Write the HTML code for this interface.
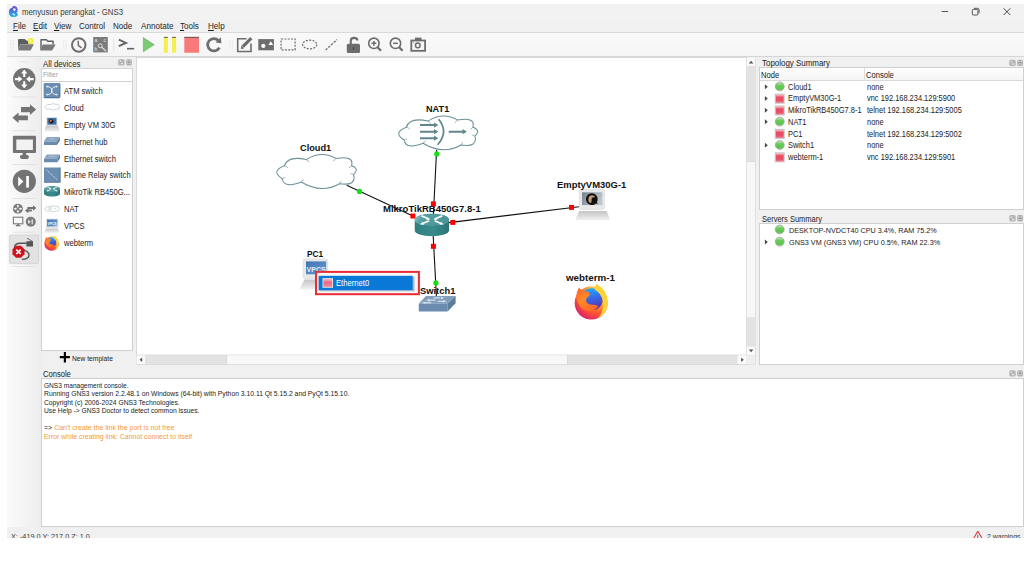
<!DOCTYPE html>
<html><head><meta charset="utf-8">
<style>
*{box-sizing:border-box;margin:0;padding:0}
html,body{width:1024px;height:576px;overflow:hidden;background:#fff;font-family:"Liberation Sans",sans-serif;color:#000}
.a{position:absolute}
.t{position:absolute;white-space:pre;-webkit-text-stroke:0px}
svg{position:absolute;left:0;top:0;overflow:visible}
</style></head><body>
<div class="a" style="left:7px;top:4px;width:1017px;height:534px;background:#f0f0f0"></div>
<div class="a" style="left:7px;top:4px;width:1017px;height:17px;background:#f2f2f2"></div>
<div class="a" style="left:7px;top:21px;width:1017px;height:11px;background:#f0f0f0"></div>
<div class="a" style="left:7px;top:32px;width:1017px;height:1px;background:#dadada"></div>
<div class="a" style="left:7px;top:33px;width:1017px;height:23px;background:linear-gradient(#f9f9f9,#f5f5f5)"></div>
<div class="a" style="left:7px;top:56px;width:1017px;height:1px;background:#d6d6d6"></div>
<div class="a" style="left:7px;top:57px;width:34px;height:470px;background:linear-gradient(90deg,#fbfbfb,#ededed)"></div>
<div class="t" style="left:21.50px;top:8.12px;font-size:8.580px;line-height:8.580px;font-weight:400;color:#3c3c3c;transform:scaleX(0.9091);transform-origin:0 0;">menyusun perangkat - GNS3</div>
<div class="t" style="left:12.80px;top:22.41px;font-size:8.910px;line-height:8.910px;font-weight:400;color:#1e1e1e;transform:scaleX(0.9091);transform-origin:0 0;"><u>F</u>ile</div>
<div class="t" style="left:32.70px;top:22.41px;font-size:8.910px;line-height:8.910px;font-weight:400;color:#1e1e1e;transform:scaleX(0.9091);transform-origin:0 0;"><u>E</u>dit</div>
<div class="t" style="left:54.40px;top:22.41px;font-size:8.910px;line-height:8.910px;font-weight:400;color:#1e1e1e;transform:scaleX(0.9091);transform-origin:0 0;"><u>V</u>iew</div>
<div class="t" style="left:79.20px;top:22.41px;font-size:8.910px;line-height:8.910px;font-weight:400;color:#1e1e1e;transform:scaleX(0.9091);transform-origin:0 0;">Control</div>
<div class="t" style="left:113.40px;top:22.41px;font-size:8.910px;line-height:8.910px;font-weight:400;color:#1e1e1e;transform:scaleX(0.9091);transform-origin:0 0;">Node</div>
<div class="t" style="left:140.90px;top:22.41px;font-size:8.910px;line-height:8.910px;font-weight:400;color:#1e1e1e;transform:scaleX(0.9091);transform-origin:0 0;">Annotate</div>
<div class="t" style="left:180.40px;top:22.41px;font-size:8.910px;line-height:8.910px;font-weight:400;color:#1e1e1e;transform:scaleX(0.9091);transform-origin:0 0;"><u>T</u>ools</div>
<div class="t" style="left:207.70px;top:22.41px;font-size:8.910px;line-height:8.910px;font-weight:400;color:#1e1e1e;transform:scaleX(0.9091);transform-origin:0 0;"><u>H</u>elp</div>
<svg width="1024" height="576" viewBox="0 0 1024 576">
<path d="M10.9,40 L10.9,49.5 M13.3,40 L13.3,49.5" stroke="#d9d9d9" stroke-width="0.7" stroke-dasharray="1.1,1.1"/><path d="M63.699999999999996,40 L63.699999999999996,49.5 M66.1,40 L66.1,49.5" stroke="#d9d9d9" stroke-width="0.7" stroke-dasharray="1.1,1.1"/><path d="M230.20000000000002,40 L230.20000000000002,49.5 M232.60000000000002,40 L232.60000000000002,49.5" stroke="#d9d9d9" stroke-width="0.7" stroke-dasharray="1.1,1.1"/>
<path d="M18,40 Q18,38.9 19,38.9 L24.6,38.9 L27,40.8 L28.5,40.8 L28.5,44 L20.5,44 L18.3,50.4 Z" fill="#5e5e5e"/>
<path d="M20.5,44.2 L33.9,44.2 L30.6,50.5 L18.3,50.5 Z" fill="#7a7a7a"/>
<circle cx="30.75" cy="41.1" r="3" fill="#f2ee3a"/><circle cx="30.6" cy="40.9" r="1.1" fill="#fbf9b0"/>
<path d="M40.3,50.4 L40.3,39.8 Q40.3,38.9 41.2,38.9 L46.6,38.9 L48,40.5 L53,40.5 Q53.8,40.5 53.8,41.3 L53.8,44.4 L52.3,44.4 L52.3,41.9 L47.5,41.9 L46.2,40.4 L41.7,40.4 L41.7,48 Z" fill="#5e5e5e"/>
<path d="M42.6,44.6 L55.7,44.6 L52.1,50.5 L40.4,50.5 Z" fill="#7a7a7a"/>
<circle cx="78.75" cy="44.9" r="6.75" fill="none" stroke="#6d6d6d" stroke-width="2"/>
<path d="M78.2,40.8 L78.4,45.6 L81.6,47.8" fill="none" stroke="#6d6d6d" stroke-width="1.5"/>
<rect x="93.2" y="37" width="14.6" height="15.4" fill="#7b7b7b"/>
<text x="94.4" y="41.8" font-size="5" fill="#e6e6e6" font-family="Liberation Sans">a</text>
<text x="103.4" y="41.8" font-size="5" fill="#e6e6e6" font-family="Liberation Sans">c</text>
<text x="94.4" y="51" font-size="5" fill="#e6e6e6" font-family="Liberation Sans">b</text>
<path d="M101.5,47 L106.2,51.2" stroke="#d6d6d6" stroke-width="1.5"/><circle cx="100.2" cy="45.8" r="2" fill="none" stroke="#e0e0e0" stroke-width="0.9"/>
<rect x="113.4" y="38.5" width="0.8" height="13" fill="#dedede"/>
<path d="M118.8,39.6 L126,42.9 L118.8,46.2" fill="none" stroke="#666" stroke-width="2"/>
<rect x="127" y="47.9" width="7.2" height="1.6" fill="#666"/>
<path d="M142.9,37.5 L154.4,44.9 L142.9,52.5 Z" fill="#7ccb73"/>
<path d="M142.9,37.5 L154.4,44.9" stroke="#4a6a44" stroke-width="0.5" fill="none"/>
<rect x="163.8" y="36.9" width="4.1" height="15.85" fill="#f6ef52"/><rect x="163.8" y="36.9" width="4.1" height="0.9" fill="#555"/>
<rect x="172" y="36.9" width="4.1" height="15.85" fill="#f6ef52"/><rect x="172" y="36.9" width="4.1" height="0.9" fill="#555"/>
<rect x="184.3" y="36.9" width="14.7" height="15.85" fill="#f87a7a"/><rect x="184.3" y="36.9" width="14.7" height="0.9" fill="#555"/>
<path d="M218.5,40.6 A6.2,6.2 0 1 0 219.4,47.6" fill="none" stroke="#6d6d6d" stroke-width="2.7"/>
<path d="M215.6,42.6 L221.4,43.2 L220.8,37.3 Z" fill="#6d6d6d"/>
<path d="M246.5,38.8 L237.7,38.8 L237.7,51.5 L251,51.5 L251,43.5" fill="none" stroke="#6d6d6d" stroke-width="1.6"/>
<path d="M242.8,46.6 L251.3,38.1" stroke="#6d6d6d" stroke-width="3.2"/>
<path d="M240.8,49 L241.4,45.6 L244.2,48.4 Z" fill="#6d6d6d"/>
<rect x="258.3" y="39.1" width="15.6" height="11.2" fill="#6d6d6d"/>
<circle cx="263.3" cy="45.9" r="2.1" fill="#fff"/><path d="M268.4,45.1 L273.2,45.1 L270.8,41.3 Z" fill="#fff"/>
<rect x="281.1" y="39" width="14" height="10.8" fill="none" stroke="#6d6d6d" stroke-width="1.2" stroke-dasharray="2,1.3"/>
<ellipse cx="309.7" cy="44.5" rx="7.1" ry="4.3" fill="none" stroke="#6d6d6d" stroke-width="1.2" stroke-dasharray="2,1.3"/>
<path d="M325.6,50 L337,39.6" stroke="#6d6d6d" stroke-width="1.3" stroke-dasharray="2.4,1.3"/>
<rect x="346.8" y="43.7" width="13.2" height="9.2" rx="1.5" fill="#6d6d6d"/>
<path d="M350.8,44 L350.8,40.5 A3.3,2.6 0 0 1 357.4,40.5" fill="none" stroke="#6d6d6d" stroke-width="2.1"/>
<rect x="352.9" y="47.2" width="0.9" height="2.6" fill="#3a3a3a"/>
<circle cx="373.9" cy="43.3" r="5.2" fill="none" stroke="#6d6d6d" stroke-width="1.6"/>
<path d="M377.6,47.2 L381,50.8" stroke="#6d6d6d" stroke-width="2.2"/>
<path d="M371.5,43.3 L376.3,43.3 M373.9,40.9 L373.9,45.7" stroke="#6d6d6d" stroke-width="1.5"/>
<circle cx="395.5" cy="43.3" r="5.2" fill="none" stroke="#6d6d6d" stroke-width="1.6"/>
<path d="M399.2,47.2 L402.6,50.8" stroke="#6d6d6d" stroke-width="2.2"/>
<path d="M393.1,43.3 L397.9,43.3" stroke="#6d6d6d" stroke-width="1.5"/>
<rect x="411.3" y="40.5" width="13.8" height="10.3" fill="none" stroke="#6d6d6d" stroke-width="1.8"/>
<rect x="415" y="37.6" width="6.5" height="2.6" fill="#6d6d6d"/>
<circle cx="417.8" cy="45.4" r="2.3" fill="none" stroke="#6d6d6d" stroke-width="1.5"/>
<rect x="413.2" y="42.3" width="0.9" height="0.9" fill="#6d6d6d"/>
</svg>
<svg width="1024" height="576" viewBox="0 0 1024 576">
<path d="M20.3,61.9 L29,61.9" stroke="#d6d6d6" stroke-width="0.8" stroke-dasharray="1.2,1"/>
<circle cx="24.25" cy="79.1" r="11.2" fill="#737373"/>
<g fill="#fff">
<path d="M24.25,69.6 L27.4,73.6 L25.3,73.6 L25.3,77 L23.2,77 L23.2,73.6 L21.1,73.6 Z"/>
<path d="M24.25,88.6 L27.4,84.6 L25.3,84.6 L25.3,81.2 L23.2,81.2 L23.2,84.6 L21.1,84.6 Z"/>
<path d="M22.4,79.1 L18.4,76 L18.4,78.1 L14.9,78.1 L14.9,80.2 L18.4,80.2 L18.4,82.3 Z"/>
<path d="M26.1,79.1 L30.1,76 L30.1,78.1 L33.6,78.1 L33.6,80.2 L30.1,80.2 L30.1,82.3 Z"/>
</g>
<rect x="12.5" y="96.6" width="23" height="0.7" fill="#dcdcdc"/>
<path d="M21,107 L30,107 L30,104.2 L36.1,109.6 L30,115 L30,112.2 L21,112.2 Z" fill="#737373"/>
<path d="M27.9,115.4 L18.5,115.4 L18.5,112.6 L12.4,117.8 L18.5,123 L18.5,120.2 L27.9,120.2 Z" fill="#737373"/>
<rect x="12.5" y="130.4" width="23" height="0.7" fill="#dcdcdc"/>
<rect x="12.9" y="135.8" width="23.1" height="17.3" rx="1" fill="#737373"/>
<rect x="16.3" y="139.5" width="16.6" height="10.5" fill="#f2f2f2"/>
<rect x="22.6" y="153" width="3.6" height="3" fill="#737373"/>
<rect x="19.9" y="155" width="9" height="3.9" rx="1.8" fill="#737373"/>
<rect x="12.5" y="164.3" width="23" height="0.7" fill="#dcdcdc"/>
<circle cx="24.3" cy="181.3" r="11.6" fill="#737373"/>
<path d="M18.2,176.6 L23.3,181.6 L18.2,186.6 Z" fill="#fff"/>
<rect x="26.2" y="176" width="2.7" height="11.6" fill="#fff"/>
<rect x="12.5" y="198.2" width="23" height="0.7" fill="#dcdcdc"/>
<g transform="translate(17.9,208.8) scale(0.45) translate(-24.25,-79.1)">
<circle cx="24.25" cy="79.1" r="11.2" fill="#7c7c7c"/>
<g fill="#fff">
<path d="M24.25,69.6 L27.4,73.6 L25.3,73.6 L25.3,77 L23.2,77 L23.2,73.6 L21.1,73.6 Z"/>
<path d="M24.25,88.6 L27.4,84.6 L25.3,84.6 L25.3,81.2 L23.2,81.2 L23.2,84.6 L21.1,84.6 Z"/>
<path d="M22.4,79.1 L18.4,76 L18.4,78.1 L14.9,78.1 L14.9,80.2 L18.4,80.2 L18.4,82.3 Z"/>
<path d="M26.1,79.1 L30.1,76 L30.1,78.1 L33.6,78.1 L33.6,80.2 L30.1,80.2 L30.1,82.3 Z"/>
</g></g>
<path d="M27.5,207 L33,207 L33,205.3 L36.3,208 L33,210.7 L33,209 L27.5,209 Z" fill="#707070"/>
<path d="M31.8,209.5 L28.3,209.5 L28.3,208 L25,210.6 L28.3,213.2 L28.3,211.6 L31.8,211.6 Z" fill="#707070"/>
<rect x="13.4" y="217.2" width="9.4" height="6.6" fill="none" stroke="#7a7a7a" stroke-width="1.1"/>
<rect x="17.2" y="223.8" width="1.8" height="1.4" fill="#7a7a7a"/><rect x="15.8" y="225" width="4.6" height="1.3" fill="#7a7a7a"/>
<circle cx="30.75" cy="221.75" r="5" fill="#7a7a7a"/>
<path d="M28.2,219.6 L30.7,221.8 L28.2,224 Z" fill="#eee"/><rect x="31.6" y="219.4" width="1.2" height="4.8" fill="#eee"/>
<rect x="12.5" y="231.8" width="23" height="0.7" fill="#dcdcdc"/>
<rect x="9.3" y="235" width="29.3" height="28.6" rx="1" fill="#e2e2e2" stroke="#cdcdcd" stroke-width="0.7"/>
<path d="M26.6,243.2 L20.5,243.2 Q14.4,243.2 14.4,248" fill="none" stroke="#555" stroke-width="1.4"/>
<path d="M26.4,241.2 L33,241.2 L33,246.5 L26.4,246.5 Z" fill="#555"/>
<path d="M27.2,238.3 L32.4,241.4" stroke="#555" stroke-width="0.9"/>
<path d="M23.6,250.4 Q29.2,251.5 29,255.5 Q28.6,259.2 21.8,259.4" fill="none" stroke="#555" stroke-width="1.4"/>
<path d="M16,245.8 L21,245.8 L24.5,249.3 L24.5,254.3 L21,257.8 L16,257.8 L12.5,254.3 L12.5,249.3 Z" fill="#d0121b"/>
<path d="M16.3,249.6 L20.7,254 M20.7,249.6 L16.3,254" stroke="#fff" stroke-width="1.6"/>
<rect x="12.5" y="266.2" width="23" height="0.7" fill="#dcdcdc"/>
</svg>
<div class="t" style="left:43.40px;top:59.64px;font-size:8.635px;line-height:8.635px;font-weight:400;color:#222;transform:scaleX(0.9091);transform-origin:0 0;">All devices</div>
<div class="a" style="left:41px;top:68px;width:92px;height:14px;background:#fff;border:1px solid #d4d4d4"></div>
<div class="t" style="left:43.20px;top:71.13px;font-size:7.370px;line-height:7.370px;font-weight:400;color:#9c9ca4;transform:scaleX(0.9091);transform-origin:0 0;">Filter</div>
<div class="a" style="left:41px;top:81px;width:92px;height:270px;background:#fff;border:1px solid #cfcfcf"></div>
<div class="t" style="left:63.80px;top:86.74px;font-size:8.360px;line-height:8.360px;font-weight:400;color:#222;transform:scaleX(0.9091);transform-origin:0 0;">ATM switch</div>
<div class="t" style="left:63.80px;top:103.68px;font-size:8.360px;line-height:8.360px;font-weight:400;color:#222;transform:scaleX(0.9091);transform-origin:0 0;">Cloud</div>
<div class="t" style="left:63.80px;top:120.64px;font-size:8.360px;line-height:8.360px;font-weight:400;color:#222;transform:scaleX(0.9091);transform-origin:0 0;">Empty VM 30G</div>
<div class="t" style="left:63.80px;top:137.59px;font-size:8.360px;line-height:8.360px;font-weight:400;color:#222;transform:scaleX(0.9091);transform-origin:0 0;">Ethernet hub</div>
<div class="t" style="left:63.80px;top:154.54px;font-size:8.360px;line-height:8.360px;font-weight:400;color:#222;transform:scaleX(0.9091);transform-origin:0 0;">Ethernet switch</div>
<div class="t" style="left:63.80px;top:171.49px;font-size:8.360px;line-height:8.360px;font-weight:400;color:#222;transform:scaleX(0.9091);transform-origin:0 0;">Frame Relay switch</div>
<div class="t" style="left:63.80px;top:188.43px;font-size:8.360px;line-height:8.360px;font-weight:400;color:#222;transform:scaleX(0.9091);transform-origin:0 0;">MikroTik RB450G...</div>
<div class="t" style="left:63.80px;top:205.39px;font-size:8.360px;line-height:8.360px;font-weight:400;color:#222;transform:scaleX(0.9091);transform-origin:0 0;">NAT</div>
<div class="t" style="left:63.80px;top:222.34px;font-size:8.360px;line-height:8.360px;font-weight:400;color:#222;transform:scaleX(0.9091);transform-origin:0 0;">VPCS</div>
<div class="t" style="left:63.80px;top:239.29px;font-size:8.360px;line-height:8.360px;font-weight:400;color:#222;transform:scaleX(0.9091);transform-origin:0 0;">webterm</div>
<div class="t" style="left:71.90px;top:354.93px;font-size:7.370px;line-height:7.370px;font-weight:400;color:#222;transform:scaleX(0.9091);transform-origin:0 0;">New template</div>
<div class="a" style="left:136px;top:57px;width:611px;height:298px;background:#fff;border-left:1px solid #d8d8d8;border-top:1px solid #d8d8d8"></div>
<svg width="0" height="0" style="position:absolute">
<defs>
<linearGradient id="rtop" x1="0" y1="0" x2="1" y2="0.3"><stop offset="0" stop-color="#9ccdcf"/><stop offset="0.3" stop-color="#56a0a3"/><stop offset="1" stop-color="#4a9598"/></linearGradient>
<linearGradient id="rside" x1="0" y1="0" x2="1" y2="0"><stop offset="0" stop-color="#2f7d80"/><stop offset="0.5" stop-color="#3a8a8c"/><stop offset="1" stop-color="#2c7577"/></linearGradient>
<linearGradient id="scr" x1="0" y1="0" x2="1" y2="1"><stop offset="0" stop-color="#3f74b0"/><stop offset="0.7" stop-color="#5a8fc8"/><stop offset="1" stop-color="#a9c6e6"/></linearGradient>
<linearGradient id="vmscr" x1="0" y1="0" x2="1" y2="0.4"><stop offset="0" stop-color="#76828d"/><stop offset="1" stop-color="#bcc4cc"/></linearGradient>
<linearGradient id="base" x1="0" y1="0" x2="0" y2="1"><stop offset="0" stop-color="#c4c4c4"/><stop offset="1" stop-color="#f2f2f2"/></linearGradient>
<radialGradient id="ffo" cx="0.78" cy="0.15" r="1.0"><stop offset="0" stop-color="#fff44f"/><stop offset="0.35" stop-color="#ffb02e"/><stop offset="0.65" stop-color="#ff5a2a"/><stop offset="0.95" stop-color="#e0206a"/></radialGradient>
<linearGradient id="ffb" x1="0.3" y1="0" x2="0.5" y2="1"><stop offset="0" stop-color="#1fb0ff"/><stop offset="0.5" stop-color="#3a64e6"/><stop offset="1" stop-color="#5a2ea6"/></linearGradient>
<linearGradient id="ffox" x1="0" y1="0" x2="0.6" y2="1"><stop offset="0" stop-color="#ff5a36"/><stop offset="0.5" stop-color="#ff8a22"/><stop offset="1" stop-color="#ff6a2a"/></linearGradient>
<linearGradient id="pink" x1="0" y1="0" x2="0" y2="1"><stop offset="0" stop-color="#f7b5c2"/><stop offset="0.45" stop-color="#e96a84"/><stop offset="1" stop-color="#f08aa0"/></linearGradient>
<linearGradient id="redsq" x1="0" y1="0" x2="0" y2="1"><stop offset="0" stop-color="#f9c0c8"/><stop offset="0.3" stop-color="#ea4a62"/><stop offset="0.75" stop-color="#e8506a"/><stop offset="1" stop-color="#f27e92"/></linearGradient>
<linearGradient id="grn" x1="0" y1="0" x2="0" y2="1"><stop offset="0" stop-color="#d4f0cc"/><stop offset="0.35" stop-color="#6ccc5c"/><stop offset="0.8" stop-color="#58c448"/><stop offset="1" stop-color="#9ae688"/></linearGradient>
<symbol id="router" viewBox="0 0 100 66">
<path d="M0,18 L0,48 A50,18 0 0 0 100,48 L100,18 Z" fill="url(#rside)"/>
<ellipse cx="50" cy="18" rx="50" ry="18" fill="url(#rtop)"/>
<g stroke="#fff" stroke-width="5" fill="none" opacity="0.95">
<path d="M20,7 L42,16"/><path d="M80,7 L58,16"/><path d="M42,21 L22,30"/><path d="M58,21 L78,30"/>
</g>
<g fill="#fff" opacity="0.95">
<path d="M46,17.5 L36,11 L34,19 Z"/><path d="M54,17.5 L64,11 L66,19 Z"/>
<path d="M15,32 L28,33 L23,25 Z"/><path d="M85,32 L72,33 L77,25 Z"/>
</g>
</symbol>
<symbol id="switch" viewBox="0 0 100 44">
<path d="M20,0 L100,0 L78,21.5 L0,21.5 Z" fill="#819fbd"/>
<path d="M0,21.5 L78,21.5 L78,42 L0,42 Z" fill="#6b8cae"/>
<path d="M78,21.5 L100,0 L100,20 L78,42 Z" fill="#5d7d9e"/>
<g fill="#eef3f8" opacity="0.85">
<path d="M40,4 L58,4 L58,7 L40,7 Z"/><path d="M60,2 L70,5.5 L60,9 Z"/>
<path d="M28,10 L46,10 L46,13 L28,13 Z"/><path d="M20,11.5 L30,8 L30,15 Z"/>
<path d="M52,13 L68,13 L68,16 L52,16 Z"/><path d="M66,11 L76,14.5 L66,18 Z"/>
<path d="M14,17 L34,17 L34,20 L14,20 Z"/><path d="M8,18.5 L18,15.5 L18,21 Z"/>
</g>
</symbol>
<symbol id="cloud" viewBox="-2 -2 86 39">
<path d="M31,6.3 Q45.8,-3.5 61,5.1 Q79.5,2 76.5,12.5 Q85,15.5 78.5,21.5 Q82,33 64.4,30.5 Q46,41 26,28.8 Q8.5,35.5 6.9,25.5 Q-5,18 9,12.5 Q12.5,2 31,6.3 Z" fill="#fff" stroke="#6a9197" stroke-width="1.05"/>
<path d="M31,6.3 Q33,7.5 33.5,9 M61,5.1 Q59,6.5 58.5,8 M9,12.5 Q11.5,13 12.5,14.5 M6.9,25.5 Q8.5,24.5 10,24.5 M26,28.8 Q27,27 28.5,26.8 M64.4,30.5 Q65,28.5 66.5,28 M78.5,21.5 Q77,20.5 75.5,20.5 M76.5,12.5 Q75.5,14 74,14.5" fill="none" stroke="#6a9197" stroke-width="0.7"/>
</symbol>
<symbol id="cloudl" viewBox="-2 -2 86 39">
<path d="M31,6.3 Q45.8,-3.5 61,5.1 Q79.5,2 76.5,12.5 Q85,15.5 78.5,21.5 Q82,33 64.4,30.5 Q46,41 26,28.8 Q8.5,35.5 6.9,25.5 Q-5,18 9,12.5 Q12.5,2 31,6.3 Z" fill="#fff" stroke="#b9c9cd" stroke-width="4"/>
</symbol>
<symbol id="slab" viewBox="0 0 100 50">
<path d="M18,0 L100,0 L82,28 L0,28 Z" fill="#8aa6c2"/>
<path d="M0,28 L82,28 L82,50 L0,50 Z" fill="#6a8bad"/>
<path d="M82,28 L100,0 L100,22 L82,50 Z" fill="#587a9c"/>
<path d="M30,12 L70,12" stroke="#d8e2ec" stroke-width="3"/>
</symbol>
<symbol id="laptop" viewBox="0 0 100 100">
<rect x="10" y="0" width="74" height="62" rx="6" fill="#e9e9e9" stroke="#d2d2d2" stroke-width="2"/>
<rect x="19" y="9" width="58" height="40" fill="url(#scr)"/>
<path d="M12,68 L86,68 L100,95 Q100,100 94,100 L6,100 Q0,100 1,95 Z" fill="url(#base)"/>
</symbol>
<symbol id="firefox" viewBox="0 0 100 100">
<circle cx="50" cy="53" r="46" fill="url(#ffo)"/>
<circle cx="51" cy="43" r="31" fill="url(#ffb)"/>
<path d="M64,0 Q94,14 96,50 Q96,82 70,95 Q88,70 82,46 Q78,26 60,16 Q58,8 64,0 Z" fill="#ffd23a"/>
<path d="M8,36 Q10,20 16,10 Q22,16 26,22 Q36,18 44,24 Q48,30 42,36 Q34,40 36,48 Q40,58 54,58 Q64,58 70,62 Q60,76 44,76 Q24,74 16,58 Q9,48 8,36 Z" fill="url(#ffox)"/>
</symbol>
</defs></svg>
<svg width="1024" height="576" viewBox="0 0 1024 576">
<!-- links -->
<g stroke="#111" stroke-width="1.1" fill="none">
<path d="M346.7,185.2 L412.9,216"/>
<path d="M436.6,150 L433.4,214"/>
<path d="M449,222.6 L579,206.7"/>
<path d="M433.2,236 L436.6,300"/>
</g>
<!-- nodes -->
<use href="#cloud" x="273.4" y="151.3" width="85.6" height="38.9" preserveAspectRatio="none"/>
<use href="#cloud" x="395.3" y="112.9" width="85.1" height="38.5" preserveAspectRatio="none"/>
<g fill="#60868c"><path d="M420,124.1 L434.0,124.1 L434.0,122.5 L438.4,125.1 L434.0,127.69999999999999 L434.0,126.1 L420,126.1 Z"/><path d="M420,130.7 L434.0,130.7 L434.0,129.1 L438.4,131.7 L434.0,134.29999999999998 L434.0,132.7 L420,132.7 Z"/><path d="M420,137.2 L434.0,137.2 L434.0,135.6 L438.4,138.2 L434.0,140.79999999999998 L434.0,139.2 L420,139.2 Z"/><path d="M448.7,130.7 L462.6,130.7 L462.6,129.1 L467,131.7 L462.6,134.29999999999998 L462.6,132.7 L448.7,132.7 Z"/></g>
<path d="M438.6,119.2 Q449,131.8 437.6,144.8" fill="none" stroke="#60868c" stroke-width="1.7"/>
<use href="#router" x="414.5" y="213.3" width="34.7" height="23.1" preserveAspectRatio="none"/>
<use href="#switch" x="418.4" y="295.9" width="37.5" height="16.3" preserveAspectRatio="none"/>
<!-- VM laptop -->
<g>
<rect x="579.3" y="189.5" width="25.3" height="20" rx="2" fill="#e9e9e9" stroke="#d6d6d6" stroke-width="0.6"/>
<rect x="582" y="192.3" width="20.4" height="12.8" fill="url(#vmscr)"/>
<path d="M591.8,193.3 A5.9,5.9 0 1 0 596.2,203.2 L597.6,204.6 L597,201.8 A5.9,5.9 0 0 0 591.8,193.3 Z" fill="#111"/>
<path d="M588.6,201.6 Q587.6,196.2 591.2,195.2 Q594,194.8 595.2,197 L593.2,197.6 Q592,197.2 591.6,199 Q592,202 590.6,203 Q589.2,202.8 588.6,201.6 Z" fill="#c29a78"/>
<path d="M579.2,211 L606.7,211 L609.9,219 Q610.2,220.3 608.8,220.3 L576.6,220.3 Q575.2,220.3 575.5,219 Z" fill="url(#base)"/>
</g>
<!-- PC -->
<g>
<rect x="303.1" y="258.9" width="24.7" height="19.6" rx="1.8" fill="#e8e8e8" stroke="#d8d8d8" stroke-width="0.6"/>
<rect x="306" y="261.4" width="20.2" height="12.9" fill="url(#scr)"/>
<text x="306.6" y="271.6" font-family="Liberation Sans" font-weight="700" font-size="6.6" fill="#fff" opacity="0.85" textLength="19" lengthAdjust="spacingAndGlyphs">VPCS</text>
<path d="M304.4,279.6 L326,279.6 L328,289.5 L299.5,289.5 Z" fill="url(#base)"/>
</g>
<use href="#firefox" x="573.2" y="283.4" width="36" height="37" preserveAspectRatio="none"/>
</svg>
<div class="t" style="left:299.80px;top:142.98px;font-size:9.450px;line-height:9.450px;font-weight:700;color:#111;transform:scaleX(0.9770);transform-origin:0 0;">Cloud1</div>
<div class="t" style="left:425.70px;top:104.39px;font-size:9.450px;line-height:9.450px;font-weight:700;color:#111;transform:scaleX(0.9720);transform-origin:0 0;">NAT1</div>
<div class="t" style="left:382.80px;top:203.79px;font-size:9.450px;line-height:9.450px;font-weight:700;color:#111;transform:scaleX(1.0090);transform-origin:0 0;">MikroTikRB450G7.8-1</div>
<div class="t" style="left:557.00px;top:179.57px;font-size:9.450px;line-height:9.450px;font-weight:700;color:#111;transform:scaleX(1.0010);transform-origin:0 0;">EmptyVM30G-1</div>
<div class="t" style="left:307.10px;top:249.19px;font-size:9.450px;line-height:9.450px;font-weight:700;color:#111;transform:scaleX(0.8760);transform-origin:0 0;">PC1</div>
<div class="t" style="left:419.50px;top:285.98px;font-size:9.450px;line-height:9.450px;font-weight:700;color:#111;transform:scaleX(0.9910);transform-origin:0 0;">Switch1</div>
<div class="t" style="left:565.70px;top:273.29px;font-size:9.450px;line-height:9.450px;font-weight:700;color:#111;transform:scaleX(1.0350);transform-origin:0 0;">webterm-1</div>
<svg width="1024" height="576" viewBox="0 0 1024 576">
<g fill="#ff0000">
<rect x="410.4" y="213.5" width="5" height="5"/>
<rect x="450.3" y="219.9" width="5" height="5"/>
<rect x="430.9" y="201.4" width="5" height="5"/>
<rect x="430.9" y="243.8" width="5" height="5"/>
<rect x="569" y="204.9" width="5" height="5"/>
</g>
<g fill="#11e011">
<circle cx="359.5" cy="191.4" r="2.6"/>
<circle cx="436.8" cy="153.9" r="2.6"/>
<circle cx="435.9" cy="282.9" r="2.6"/>
</g>
<!-- popup -->
<rect x="316" y="271.9" width="102.9" height="22.3" fill="#f7f7f7" stroke="#ea2b33" stroke-width="2"/>
<rect x="413" y="277" width="1.6" height="14.3" fill="#b9b9b9"/>
<rect x="320" y="290.2" width="94.6" height="1.2" fill="#c9c9c9"/>
<rect x="318.6" y="275.8" width="94.2" height="14.5" fill="#0a78d7"/>
<rect x="322.5" y="278.1" width="10.5" height="9.7" fill="#e3e3e3"/>
<rect x="323.4" y="279" width="8.7" height="7.9" fill="url(#pink)"/>
</svg>
<div class="t" style="left:336.30px;top:279.46px;font-size:8.426px;line-height:8.426px;font-weight:400;color:#fff;transform:scaleX(0.9091);transform-origin:0 0;-webkit-text-stroke:0">Ethernet0</div>
<svg width="1024" height="576" viewBox="0 0 1024 576">
<!-- ATM switch -->
<rect x="43.6" y="83" width="16.4" height="15.2" rx="1.2" fill="#6a8db2"/>
<path d="M44.3,97.6 L59.3,97.6 L60,96.6 L60,84 L59.3,83.4" fill="none" stroke="#46698c" stroke-width="0.8"/>
<path d="M46.8,86.6 Q51.8,86.6 51.8,90.6 Q51.8,94.6 56.8,94.6 M46.8,94.6 Q51.8,94.6 51.8,90.6 Q51.8,86.6 56.8,86.6" fill="none" stroke="#eef3f8" stroke-width="1"/>
<path d="M57.8,86.6 L56,85.4 L56,87.8 Z M57.8,94.6 L56,93.4 L56,95.8 Z M45.8,86.6 L47.6,85.4 L47.6,87.8 Z M45.8,94.6 L47.6,93.4 L47.6,95.8 Z" fill="#eef3f8"/>
<!-- Cloud -->
<use href="#cloudl" x="44" y="102.6" width="16.2" height="8.2" preserveAspectRatio="none"/>
<!-- Empty VM -->
<rect x="46.6" y="117.3" width="10.6" height="8" fill="#c9d4de"/>
<rect x="47.4" y="118" width="9" height="6.6" fill="#3d6fa8"/>
<circle cx="51.2" cy="121.3" r="2.3" fill="#1a1a1a"/><path d="M49.6,122.6 Q49.4,119.6 51.6,119.4 Q52.6,120.2 51.5,121.2 Z" fill="#ff7a1a"/>
<path d="M46,125.6 L57.8,125.6 L59.6,130.8 Q59.6,131.6 58.8,131.6 L45,131.6 Q44.2,131.6 44.3,130.8 Z" fill="url(#base)"/>
<!-- Ethernet hub / switch -->
<use href="#slab" x="43.6" y="137.1" width="16.5" height="8" preserveAspectRatio="none"/>
<use href="#slab" x="44" y="154.3" width="16.2" height="8.1" preserveAspectRatio="none"/>
<!-- Frame relay -->
<rect x="44" y="167.5" width="16.2" height="14.8" fill="#6a8db2"/>
<path d="M60.2,167.5 L60.2,182.3 L44,182.3" fill="none" stroke="#4b6d8f" stroke-width="0.8"/>
<path d="M46.5,170 L57.5,180" stroke="#e8eef5" stroke-width="0.9" stroke-dasharray="1.2,0.9"/>
<!-- MikroTik -->
<use href="#router" x="44" y="185.9" width="16.2" height="10.8" preserveAspectRatio="none"/>
<!-- NAT -->
<use href="#cloudl" x="44" y="205" width="16" height="7.4" preserveAspectRatio="none"/>
<path d="M48.5,207.6 L52,207.6 M48.5,208.7 L52,208.7 M48.5,209.8 L52,209.8 M53.5,208.7 L56.5,208.7" stroke="#b6c7cb" stroke-width="0.5"/>
<!-- VPCS -->
<rect x="45.8" y="218.4" width="12.6" height="9.6" rx="0.8" fill="#e3e3e3"/>
<rect x="47" y="219.5" width="10.3" height="6.9" fill="url(#scr)"/>
<text x="47.5" y="224.6" font-family="Liberation Sans" font-size="3.3" font-weight="700" fill="#fff" textLength="9" lengthAdjust="spacingAndGlyphs">VPCS</text>
<path d="M46.2,228.6 L57.6,228.6 L59.8,232.8 L44,232.8 Z" fill="url(#base)"/>
<!-- Firefox -->
<use href="#firefox" x="43.4" y="235.4" width="16.3" height="15.6" preserveAspectRatio="none"/>
</svg>
<div class="a" style="left:759px;top:67px;width:265px;height:143px;background:#fff;border:1px solid #cfcfcf"></div>
<div class="t" style="left:761.60px;top:59.37px;font-size:8.745px;line-height:8.745px;font-weight:400;color:#222;transform:scaleX(0.9091);transform-origin:0 0;">Topology Summary</div>
<div class="a" style="left:759px;top:223px;width:265px;height:142px;background:#fff;border:1px solid #cfcfcf"></div>
<div class="t" style="left:761.60px;top:215.61px;font-size:8.250px;line-height:8.250px;font-weight:400;color:#222;transform:scaleX(0.9091);transform-origin:0 0;">Servers Summary</div>
<div class="t" style="left:43.40px;top:370.24px;font-size:8.360px;line-height:8.360px;font-weight:400;color:#222;transform:scaleX(0.9091);transform-origin:0 0;">Console</div>
<div class="a" style="left:41px;top:378px;width:983px;height:149px;background:#fff;border:1px solid #cfcfcf"></div>
<div class="a" style="left:760px;top:68px;width:263px;height:13.1px;background:linear-gradient(#ffffff,#f4f4f4);border-bottom:1px solid #d8d8d8"></div>
<div class="a" style="left:864.3px;top:68px;width:0.8px;height:12.2px;background:#dcdcdc"></div>
<div class="t" style="left:760.80px;top:71.04px;font-size:8.360px;line-height:8.360px;font-weight:400;color:#222;transform:scaleX(0.9091);transform-origin:0 0;">Node</div>
<div class="t" style="left:866.30px;top:71.04px;font-size:8.360px;line-height:8.360px;font-weight:400;color:#222;transform:scaleX(0.9091);transform-origin:0 0;">Console</div>
<div class="t" style="left:788.40px;top:83.71px;font-size:8.250px;line-height:8.250px;font-weight:400;color:#222;transform:scaleX(0.9045);transform-origin:0 0;">Cloud1</div>
<div class="t" style="left:866.60px;top:83.69px;font-size:8.195px;line-height:8.195px;font-weight:400;color:#222;transform:scaleX(0.9091);transform-origin:0 0;">none</div>
<div class="t" style="left:788.40px;top:95.43px;font-size:8.250px;line-height:8.250px;font-weight:400;color:#222;transform:scaleX(0.9045);transform-origin:0 0;">EmptyVM30G-1</div>
<div class="t" style="left:866.60px;top:95.41px;font-size:8.195px;line-height:8.195px;font-weight:400;color:#222;transform:scaleX(0.9091);transform-origin:0 0;">vnc 192.168.234.129:5900</div>
<div class="t" style="left:788.40px;top:107.15px;font-size:8.250px;line-height:8.250px;font-weight:400;color:#222;transform:scaleX(0.9045);transform-origin:0 0;">MikroTikRB450G7.8-1</div>
<div class="t" style="left:866.60px;top:107.14px;font-size:8.195px;line-height:8.195px;font-weight:400;color:#222;transform:scaleX(0.9091);transform-origin:0 0;">telnet 192.168.234.129:5005</div>
<div class="t" style="left:788.40px;top:118.88px;font-size:8.250px;line-height:8.250px;font-weight:400;color:#222;transform:scaleX(0.9045);transform-origin:0 0;">NAT1</div>
<div class="t" style="left:866.60px;top:118.86px;font-size:8.195px;line-height:8.195px;font-weight:400;color:#222;transform:scaleX(0.9091);transform-origin:0 0;">none</div>
<div class="t" style="left:788.40px;top:130.60px;font-size:8.250px;line-height:8.250px;font-weight:400;color:#222;transform:scaleX(0.9045);transform-origin:0 0;">PC1</div>
<div class="t" style="left:866.60px;top:130.58px;font-size:8.195px;line-height:8.195px;font-weight:400;color:#222;transform:scaleX(0.9091);transform-origin:0 0;">telnet 192.168.234.129:5002</div>
<div class="t" style="left:788.40px;top:142.32px;font-size:8.250px;line-height:8.250px;font-weight:400;color:#222;transform:scaleX(0.9045);transform-origin:0 0;">Switch1</div>
<div class="t" style="left:866.60px;top:142.30px;font-size:8.195px;line-height:8.195px;font-weight:400;color:#222;transform:scaleX(0.9091);transform-origin:0 0;">none</div>
<div class="t" style="left:788.40px;top:154.04px;font-size:8.250px;line-height:8.250px;font-weight:400;color:#222;transform:scaleX(0.9045);transform-origin:0 0;">webterm-1</div>
<div class="t" style="left:866.60px;top:154.02px;font-size:8.195px;line-height:8.195px;font-weight:400;color:#222;transform:scaleX(0.9091);transform-origin:0 0;">vnc 192.168.234.129:5901</div>
<div class="t" style="left:788.70px;top:226.74px;font-size:8.030px;line-height:8.030px;font-weight:400;color:#222;transform:scaleX(0.8991);transform-origin:0 0;">DESKTOP-NVDCT40 CPU 3.4%, RAM 75.2%</div>
<div class="t" style="left:788.70px;top:238.85px;font-size:8.030px;line-height:8.030px;font-weight:400;color:#222;transform:scaleX(0.9073);transform-origin:0 0;">GNS3 VM (GNS3 VM) CPU 0.5%, RAM 22.3%</div>
<svg width="1024" height="576" viewBox="0 0 1024 576"><path d="M764.9,84.20 L767.8,86.70 L764.9,89.20 Z" fill="#484848"/><circle cx="779.75" cy="86.40" r="4.4" fill="url(#grn)" stroke="#9ea59e" stroke-width="0.9"/><path d="M764.9,95.92 L767.8,98.42 L764.9,100.92 Z" fill="#484848"/><rect x="774.8" y="93.72" width="9.9" height="10" fill="#c4c4c4"/><rect x="775.9" y="94.82" width="7.7" height="7.9" fill="url(#redsq)"/><path d="M764.9,107.64 L767.8,110.14 L764.9,112.64 Z" fill="#484848"/><rect x="774.8" y="105.44" width="9.9" height="10" fill="#c4c4c4"/><rect x="775.9" y="106.54" width="7.7" height="7.9" fill="url(#redsq)"/><path d="M764.9,119.36 L767.8,121.86 L764.9,124.36 Z" fill="#484848"/><circle cx="779.75" cy="121.56" r="4.4" fill="url(#grn)" stroke="#9ea59e" stroke-width="0.9"/><rect x="774.8" y="128.88" width="9.9" height="10" fill="#c4c4c4"/><rect x="775.9" y="129.98" width="7.7" height="7.9" fill="url(#redsq)"/><path d="M764.9,142.80 L767.8,145.30 L764.9,147.80 Z" fill="#484848"/><circle cx="779.75" cy="145.00" r="4.4" fill="url(#grn)" stroke="#9ea59e" stroke-width="0.9"/><rect x="774.8" y="152.32" width="9.9" height="10" fill="#c4c4c4"/><rect x="775.9" y="153.42" width="7.7" height="7.9" fill="url(#redsq)"/><circle cx="779.75" cy="229.50" r="4.4" fill="url(#grn)" stroke="#9ea59e" stroke-width="0.9"/><path d="M764.9,239.40 L767.8,241.90 L764.9,244.40 Z" fill="#484848"/><circle cx="779.75" cy="241.60" r="4.4" fill="url(#grn)" stroke="#9ea59e" stroke-width="0.9"/></svg>
<div class="t" style="left:43.75px;top:381.67px;font-size:7.480px;line-height:7.480px;font-weight:400;color:#222;transform:scaleX(0.8809);transform-origin:0 0;">GNS3 management console.</div>
<div class="t" style="left:43.75px;top:390.37px;font-size:7.480px;line-height:7.480px;font-weight:400;color:#222;transform:scaleX(0.9082);transform-origin:0 0;">Running GNS3 version 2.2.48.1 on Windows (64-bit) with Python 3.10.11 Qt 5.15.2 and PyQt 5.15.10.</div>
<div class="t" style="left:43.75px;top:398.87px;font-size:7.480px;line-height:7.480px;font-weight:400;color:#222;transform:scaleX(0.9009);transform-origin:0 0;">Copyright (c) 2006-2024 GNS3 Technologies.</div>
<div class="t" style="left:43.75px;top:407.28px;font-size:7.480px;line-height:7.480px;font-weight:400;color:#222;transform:scaleX(0.8991);transform-origin:0 0;">Use Help -&gt; GNS3 Doctor to detect common issues.</div>
<div class="t" style="left:43.75px;top:432.87px;font-size:7.480px;line-height:7.480px;font-weight:400;color:#f59840;transform:scaleX(0.9273);transform-origin:0 0;">Error while creating link: Cannot connect to itself</div>
<div class="t" style="left:43.75px;top:424.17px;font-size:7.480px;line-height:7.480px;font-weight:400;color:#222;transform:scaleX(0.9391);transform-origin:0 0;">=&gt; <span style="color:#f59840">Can't create the link the port is not free</span></div>
<svg width="1024" height="576" viewBox="0 0 1024 576">
<defs><linearGradient id="gns" x1="0" y1="0" x2="0" y2="1"><stop offset="0" stop-color="#7a3fd0"/><stop offset="0.5" stop-color="#3d7ee0"/><stop offset="1" stop-color="#22b8d8"/></linearGradient></defs>
<path d="M13.5,6 Q17.5,6.4 17.6,9.5 Q17.8,12 16.2,13 Q18.4,13.5 17.6,15.5 Q16,17.3 13,17 Q9.2,16.7 8.9,12.4 Q8.8,8.3 12.3,7.8 Q12.4,6.2 13.5,6 Z" fill="url(#gns)"/>
<circle cx="14.3" cy="9.6" r="1.3" fill="#f0f0f8"/><path d="M12.6,13.5 L14.8,15.3" stroke="#e8f4f8" stroke-width="1.2"/>
<rect x="941.6" y="11" width="6.6" height="0.9" fill="#444"/>
<rect x="972.3" y="9.4" width="5.6" height="5.6" rx="1" fill="none" stroke="#444" stroke-width="0.9"/>
<path d="M974,8.3 L977.6,8.3 Q979,8.3 979,9.7 L979,13.2" fill="none" stroke="#444" stroke-width="0.9"/>
<path d="M1003.6,8.3 L1010.3,15 M1010.3,8.3 L1003.6,15" stroke="#333" stroke-width="0.9"/>
<rect x="118.2" y="59.2" width="6.4" height="6.4" rx="1.6" fill="#b4b4b4"/><rect x="119.7" y="60.6" width="1.3" height="1.3" fill="#eee"/><rect x="121.0" y="63.0" width="2" height="1.2" fill="#eee"/><rect x="126.10000000000001" y="59.2" width="5.8" height="6.4" rx="1.6" fill="#b0b0b0"/><path d="M127.2,60.5 L130.8,64.2 M130.8,60.5 L127.2,64.2" stroke="#f2f2f2" stroke-width="0.9"/><path d="M129.0,61.6 L129.0,63.1" stroke="#666" stroke-width="1.2"/>
<rect x="1009.3" y="59.7" width="6.4" height="6.4" rx="1.6" fill="#b4b4b4"/><rect x="1010.8" y="61.1" width="1.3" height="1.3" fill="#eee"/><rect x="1012.0999999999999" y="63.5" width="2" height="1.2" fill="#eee"/><rect x="1017.1999999999999" y="59.7" width="5.8" height="6.4" rx="1.6" fill="#b0b0b0"/><path d="M1018.3,61.0 L1021.9,64.7 M1021.9,61.0 L1018.3,64.7" stroke="#f2f2f2" stroke-width="0.9"/><path d="M1020.0999999999999,62.1 L1020.0999999999999,63.6" stroke="#666" stroke-width="1.2"/>
<rect x="1009.3" y="215.1" width="6.4" height="6.4" rx="1.6" fill="#b4b4b4"/><rect x="1010.8" y="216.5" width="1.3" height="1.3" fill="#eee"/><rect x="1012.0999999999999" y="218.9" width="2" height="1.2" fill="#eee"/><rect x="1017.1999999999999" y="215.1" width="5.8" height="6.4" rx="1.6" fill="#b0b0b0"/><path d="M1018.3,216.4 L1021.9,220.1 M1021.9,216.4 L1018.3,220.1" stroke="#f2f2f2" stroke-width="0.9"/><path d="M1020.0999999999999,217.5 L1020.0999999999999,219.0" stroke="#666" stroke-width="1.2"/>
<rect x="1009.3" y="370.2" width="6.4" height="6.4" rx="1.6" fill="#b4b4b4"/><rect x="1010.8" y="371.59999999999997" width="1.3" height="1.3" fill="#eee"/><rect x="1012.0999999999999" y="374.0" width="2" height="1.2" fill="#eee"/><rect x="1017.1999999999999" y="370.2" width="5.8" height="6.4" rx="1.6" fill="#b0b0b0"/><path d="M1018.3,371.5 L1021.9,375.2 M1021.9,371.5 L1018.3,375.2" stroke="#f2f2f2" stroke-width="0.9"/><path d="M1020.0999999999999,372.59999999999997 L1020.0999999999999,374.09999999999997" stroke="#666" stroke-width="1.2"/>
<!-- canvas scrollbars -->
<rect x="746.3" y="57.6" width="8.9" height="297.4" fill="#e8e8e8"/>
<rect x="746.3" y="57.6" width="0.7" height="306.8" fill="#dcdcdc"/>
<rect x="747" y="57.6" width="8.2" height="8.4" fill="#fafafa"/>
<path d="M748.8,63.4 L751.1,60.8 L753.4,63.4 Z" fill="#555"/>
<rect x="747" y="66" width="8.2" height="95.4" fill="#e3e3e3"/>
<rect x="747" y="161.4" width="8.2" height="156.6" fill="linear-gradient" style="fill:#f7f7f7"/>
<rect x="747" y="161.2" width="8.2" height="0.7" fill="#cfcfcf"/><rect x="747" y="317.6" width="8.2" height="0.7" fill="#cfcfcf"/>
<rect x="747" y="318" width="8.2" height="28.7" fill="#e3e3e3"/>
<rect x="747" y="346.7" width="8.2" height="8.3" fill="#fafafa"/>
<path d="M748.8,349.6 L751.1,352.2 L753.4,349.6 Z" fill="#555"/>
<rect x="136.4" y="355" width="618.8" height="9.4" fill="#e3e3e3"/>
<rect x="136.4" y="354.6" width="610" height="0.7" fill="#d8d8d8"/>
<rect x="136.4" y="364" width="618.8" height="0.6" fill="#d0d0d0"/>
<rect x="137" y="355.3" width="8" height="8.7" fill="#fafafa"/>
<path d="M142.2,357.5 L139.5,359.7 L142.2,361.9 Z" fill="#555"/>
<rect x="226.5" y="355.3" width="341" height="8.7" fill="#f8f8f8"/>
<rect x="226.3" y="355.3" width="0.7" height="8.7" fill="#cfcfcf"/><rect x="567.2" y="355.3" width="0.7" height="8.7" fill="#cfcfcf"/>
<rect x="737.7" y="355.3" width="8.6" height="8.7" fill="#fafafa"/>
<path d="M741.1,357.5 L743.8,359.7 L741.1,361.9 Z" fill="#555"/>
<rect x="746.3" y="355.3" width="8.9" height="9.1" fill="#efefef"/>
<rect x="755" y="57.6" width="0.6" height="306.8" fill="#d8d8d8"/>
<!-- new template plus -->
<path d="M64.9,351.9 L64.9,362.5 M59.8,357.2 L69.9,357.2" stroke="#000" stroke-width="2.2"/>
<!-- warning -->
<path d="M977.8,531.3 L981.8,538 M977.8,531.3 L973.8,538" stroke="#d83a3a" stroke-width="1.1" fill="none"/>
<rect x="977.3" y="535" width="0.9" height="3" fill="#555"/>
</svg>
<div class="t" style="left:10.90px;top:532.74px;font-size:8.030px;line-height:8.030px;font-weight:400;color:#3a3a3a;transform:scaleX(0.9091);transform-origin:0 0;">X: -419.0 Y: 217.0 Z: 1.0</div>
<div class="t" style="left:986.50px;top:532.62px;font-size:7.645px;line-height:7.645px;font-weight:400;color:#3a3a3a;transform:scaleX(0.9091);transform-origin:0 0;">2 warnings</div>
<div class="a" style="left:0px;top:538px;width:1024px;height:38px;background:#fff"></div>
</body></html>
